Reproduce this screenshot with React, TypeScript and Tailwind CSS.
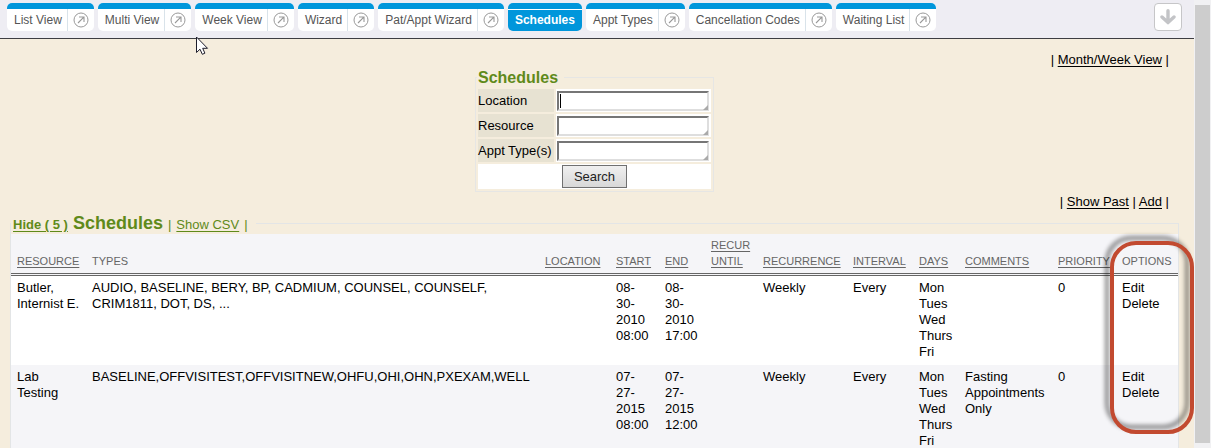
import React from 'react';

const tabs = [
  { label: 'List View' },
  { label: 'Multi View' },
  { label: 'Week View' },
  { label: 'Wizard' },
  { label: 'Pat/Appt Wizard' },
  { label: 'Schedules', active: true },
  { label: 'Appt Types' },
  { label: 'Cancellation Codes' },
  { label: 'Waiting List' },
];

const columns = [
  { label: 'RESOURCE', width: 'w-[75px]', sortable: true },
  { label: 'TYPES', width: '', sortable: false },
  { label: 'LOCATION', width: 'w-[71px]', sortable: true },
  { label: 'START', width: 'w-[49px]', sortable: true },
  { label: 'END', width: 'w-[46px]', sortable: true },
  { label: 'RECUR UNTIL', width: 'w-[52px]', sortable: true },
  { label: 'RECURRENCE', width: 'w-[90px]', sortable: true },
  { label: 'INTERVAL', width: 'w-[66px]', sortable: true },
  { label: 'DAYS', width: 'w-[46px]', sortable: true },
  { label: 'COMMENTS', width: 'w-[93px]', sortable: true },
  { label: 'PRIORITY', width: 'w-[64px]', sortable: true },
  { label: 'OPTIONS', width: 'w-[62px]', sortable: false },
];

const days = ['Mon', 'Tues', 'Wed', 'Thurs', 'Fri'];

const schedules = [
  {
    resource: ['Butler,', 'Internist E.'],
    types: ['AUDIO, BASELINE, BERY, BP, CADMIUM, COUNSEL, COUNSELF,', 'CRIM1811, DOT, DS, ...'],
    start: ['08-', '30-', '2010', '08:00'],
    end: ['08-', '30-', '2010', '17:00'],
    comments: [] as string[],
  },
  {
    resource: ['Lab', 'Testing'],
    types: ['BASELINE,OFFVISITEST,OFFVISITNEW,OHFU,OHI,OHN,PXEXAM,WELL'],
    start: ['07-', '27-', '2015', '08:00'],
    end: ['07-', '27-', '2015', '12:00'],
    comments: ['Fasting', 'Appointments', 'Only'],
  },
];

function OpenIcon() {
  return (
    <svg width="16" height="16" viewBox="0 0 16 16" fill="none" stroke="#999" aria-hidden="true">
      <circle cx="8" cy="8" r="7" strokeWidth="1" />
      <path d="M5 11 10.8 5.2M6 5h5v5" strokeWidth="1.1" />
    </svg>
  );
}

function Tab({ label, active }: { label: string; active?: boolean }) {
  if (active) {
    return (
      <a href="#schedules" className="flex h-7 flex-col overflow-hidden rounded-[5px] bg-[#0096db] text-white">
        <span className="h-[7px] border-b border-white" />
        <span className="flex-1 px-[7px] text-xs leading-5 font-bold">{label}</span>
      </a>
    );
  }
  return (
    <div className="flex h-7 flex-col overflow-hidden rounded-[5px] bg-white text-[#555]">
      <span className="h-[6px] shrink-0 bg-[#0096db]" />
      <div className="flex flex-1">
        <a href="#view" className="pr-[5px] pl-[7px] text-xs leading-[22px]">{label}</a>
        <a href="#open" aria-label={`Open ${label}`} className="flex w-[27px] items-center justify-center border-l border-[#d9e3ea]">
          <OpenIcon />
        </a>
      </div>
    </div>
  );
}

function Field({ id, label, caret }: { id: string; label: string; caret?: boolean }) {
  return (
    <tr className="h-[23px]">
      <td className="w-[76px] bg-[#e7e2d2] p-0 whitespace-nowrap">
        <label htmlFor={id}>{label}</label>
      </td>
      <td className="w-[155px] bg-white p-0">
        <div className="relative ml-px h-5 w-[152px]">
          <textarea
            id={id}
            rows={1}
            className="block h-5 w-full resize-none overflow-hidden border-2 border-t-[#767676] border-r-[#dedede] border-b-[#dedede] border-l-[#767676] bg-white px-1 leading-4 outline-none"
          />
          {caret && <span className="absolute top-[3px] left-[3px] h-[14px] w-px bg-black" />}
          <svg className="absolute right-px bottom-px" width="5" height="5" viewBox="0 0 5 5" aria-hidden="true">
            <path d="M5 0V5H0Z" fill="#aaa" />
          </svg>
        </div>
      </td>
    </tr>
  );
}

function Lines({ items }: { items: string[] }) {
  return (
    <td className="px-[6px] pt-1 pb-[5px]">
      {items.map((item) => (
        <div key={item} className="whitespace-nowrap">{item}</div>
      ))}
    </td>
  );
}

export default function App() {
  return (
    <div className="flex h-screen overflow-hidden bg-[#f1f1f3] font-['Liberation_Sans',Arial,sans-serif] text-[13px] leading-4 text-black">
      <div className="relative flex min-w-0 flex-1 flex-col bg-[#f5eddd]">
        <header className="flex h-[39px] shrink-0 items-start justify-between border-b border-[#3d3d42] bg-[#eeedf3] pt-[3px] pr-3 pl-[7px]">
          <nav className="flex gap-1 whitespace-nowrap">
            {tabs.map((tab) => (
              <Tab key={tab.label} {...tab} />
            ))}
          </nav>
          <button type="button" aria-label="Expand" className="flex size-7 items-center justify-center rounded-[4px] border border-[#c6c6c8] bg-white">
            <svg width="16" height="16" viewBox="0 0 16 16" fill="none" stroke="#c3c4c7" strokeWidth="3.4" strokeLinecap="round" strokeLinejoin="round" aria-hidden="true">
              <path d="M8 1.7V13M2 8 8 13.6 14 8" />
            </svg>
          </button>
        </header>

        <main className="flex flex-col pt-[13px] pl-[10px] pr-[15px]">
          <div className="pr-[10px] text-right">
            | <a href="#month" className="underline underline-offset-2">Month/Week View</a> |
          </div>

          <fieldset className="mx-auto border border-[#e6e6e4]">
            <legend className="ml-px h-[19px] pr-[6px] pl-px text-base leading-[19px] font-bold text-[#5f8a1a]">Schedules</legend>
            <table className="border-separate border-spacing-[2px]">
              <tbody>
                <Field id="location" label="Location" caret />
                <Field id="resource" label="Resource" />
                <Field id="appt-types" label="Appt Type(s)" />
                <tr>
                  <td colSpan={2} className="bg-white px-0 py-px text-center">
                    <button type="button" className="mx-auto block h-[23px] w-[65px] border border-[#707070] bg-linear-to-b from-[#f0f0f0] to-[#d8d8d8] text-[#222]">
                      Search
                    </button>
                  </td>
                </tr>
              </tbody>
            </table>
          </fieldset>

          <div className="pt-[2px] pr-[10px] pb-[3px] text-right">
            | <a href="#past" className="underline underline-offset-2">Show Past</a> |{' '}
            <a href="#add" className="underline underline-offset-2">Add</a> |
          </div>

          <fieldset className="min-w-0 border border-[#e3e5e6]">
            <legend className="flex h-[21px] items-baseline gap-[5px] pr-2 pl-[2px] leading-5 text-[#5f8a1a]">
              <a href="#hide" className="font-bold underline underline-offset-2">Hide ( 5 )</a>
              <span className="text-lg leading-5 font-bold">Schedules</span>
              <span>|</span>
              <a href="#csv" className="underline underline-offset-2">Show CSV</a>
              <span>|</span>
            </legend>
            <table className="w-full table-fixed border-collapse">
              <thead>
                <tr className="border-b-3 border-double border-[#666] bg-[#f5f5f8] text-left align-bottom text-[11px] text-[#666]">
                  {columns.map((column) => (
                    <th key={column.label} className={`${column.width} px-[6px] pt-[3px] pb-1 font-normal`}>
                      {column.sortable ? (
                        <a href="#sort" className="underline underline-offset-2">{column.label}</a>
                      ) : (
                        column.label
                      )}
                    </th>
                  ))}
                </tr>
              </thead>
              <tbody>
                {schedules.map((row) => (
                  <tr key={row.types[0]} className="bg-white align-top even:bg-[#f5f5f8]">
                    <Lines items={row.resource} />
                    <Lines items={row.types} />
                    <Lines items={[]} />
                    <Lines items={row.start} />
                    <Lines items={row.end} />
                    <Lines items={[]} />
                    <Lines items={['Weekly']} />
                    <Lines items={['Every']} />
                    <Lines items={days} />
                    <Lines items={row.comments} />
                    <Lines items={['0']} />
                    <td className="px-[6px] pt-1">
                      <a href="#edit" className="block">Edit</a>
                      <a href="#delete" className="block">Delete</a>
                    </td>
                  </tr>
                ))}
              </tbody>
            </table>
          </fieldset>
        </main>

        <div className="pointer-events-none absolute top-[241px] right-0 h-[193px] w-[84px] rounded-[26px] border-4 border-[#c24a30] drop-shadow-[-5px_-5px_2px_rgba(0,0,0,0.45)]" />

        <svg className="pointer-events-none absolute top-9 left-[196px]" width="13" height="20" viewBox="0 0 13 20" aria-hidden="true">
          <path d="M.5 1V16.5L4 13.2 6.3 18.3 8.9 17.2 6.7 12.3H11.5Z" fill="#fff" stroke="#1d1d2b" />
        </svg>
      </div>

      <aside className="w-[17px] shrink-0 px-px pt-[5px] pb-[5px]" aria-hidden="true">
        <div className="h-full w-[15px] bg-[#cdcdcd]" />
      </aside>
    </div>
  );
}
